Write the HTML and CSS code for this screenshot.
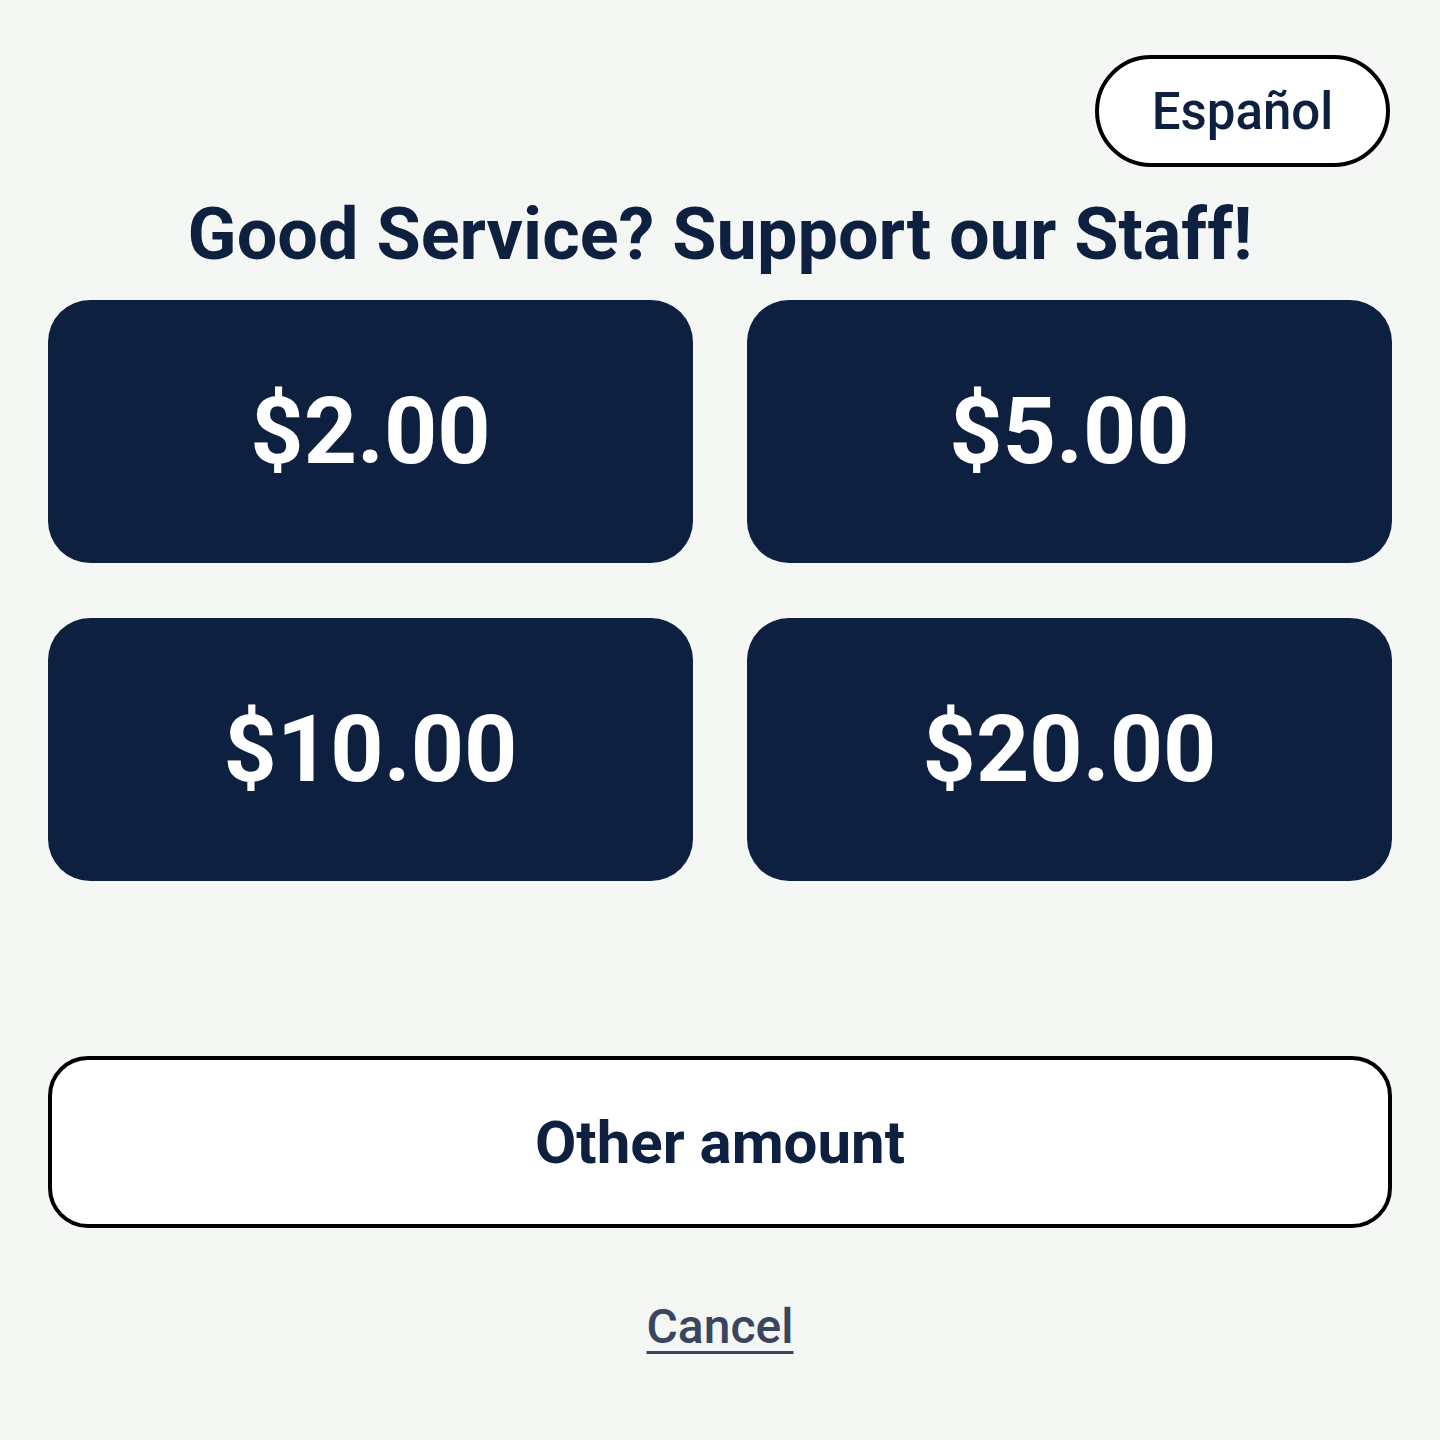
FILE: index.html
```html
<!DOCTYPE html>
<html lang="en">
<head>
<meta charset="utf-8">
<title>Add a tip</title>
<link rel="stylesheet" href="styles.css">
</head>
<body>
<main class="tip-screen">
  <div class="top-bar">
    <button class="lang-btn" type="button">Español</button>
  </div>
  <h1 class="title">Good Service? Support our Staff!</h1>
  <div class="amounts">
    <button class="amount" type="button">$2.00</button>
    <button class="amount" type="button">$5.00</button>
    <button class="amount" type="button">$10.00</button>
    <button class="amount" type="button">$20.00</button>
  </div>
  <button class="other" type="button">Other amount</button>
  <div class="cancel-row">
    <a class="cancel" href="#">Cancel</a>
  </div>
</main>
</body>
</html>
```
FILE: styles.css
```css
* { box-sizing: border-box; }

html, body {
  margin: 0;
  padding: 0;
  background: #f5f7f5;
}

body {
  font-family: Roboto, "Liberation Sans", sans-serif;
  color: #0e2040;
}

.tip-screen {
  width: 1440px;
  min-height: 1440px;
  padding: 55px 48px 0 48px;
  display: flex;
  flex-direction: column;
}

.top-bar {
  display: flex;
  justify-content: flex-end;
  padding-right: 2px;
}

.lang-btn {
  width: 295px;
  height: 112px;
  border: 4px solid #000;
  border-radius: 56px;
  background: #fff;
  font-family: inherit;
  font-size: 51px;
  font-weight: 500;
  color: #0e2040;
  padding: 0;
  cursor: pointer;
}

.title {
  margin: 18px 0 0 0;
  text-align: center;
  font-size: 72px;
  line-height: 100px;
  font-weight: 700;
  color: #0e2040;
}

.amounts {
  margin-top: 15px;
  display: grid;
  grid-template-columns: 1fr 1fr;
  grid-auto-rows: 263px;
  column-gap: 54px;
  row-gap: 55px;
}

.amount {
  border: none;
  border-radius: 42px;
  background: #0e2040;
  color: #fff;
  font-family: inherit;
  font-size: 93px;
  font-weight: 700;
  cursor: pointer;
}

.other {
  margin-top: 175px;
  height: 172px;
  width: 100%;
  border: 4px solid #000;
  border-radius: 40px;
  background: #fff;
  font-family: inherit;
  font-size: 60px;
  font-weight: 700;
  color: #0e2040;
  cursor: pointer;
}

.cancel-row {
  margin-top: 70px;
  display: flex;
  justify-content: center;
}

.cancel {
  font-size: 48px;
  font-weight: 500;
  color: #3a4660;
  text-decoration: underline;
  text-decoration-thickness: 3px;
  text-underline-offset: 8px;
}
```
